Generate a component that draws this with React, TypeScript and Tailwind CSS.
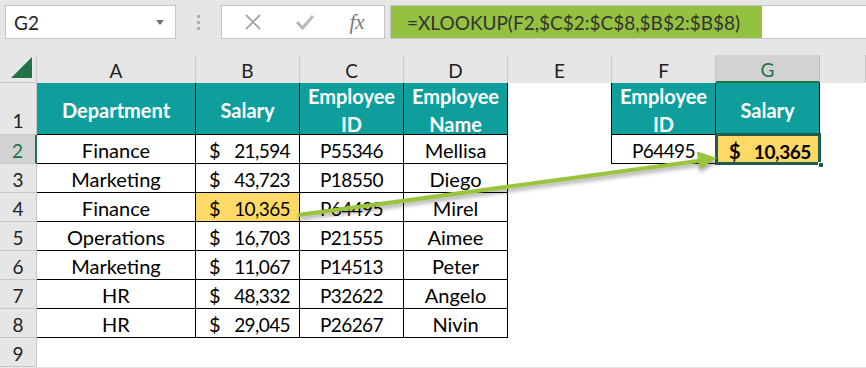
import React from "react";

const cols = ["A", "B", "C", "D", "E", "F", "G", ""];

type Row = { dept: string; sal: string; id: string; name: string; hl?: boolean };
const rows: Row[] = [
  { dept: "Finance", sal: "21,594", id: "P55346", name: "Mellisa" },
  { dept: "Marketing", sal: "43,723", id: "P18550", name: "Diego" },
  { dept: "Finance", sal: "10,365", id: "P64495", name: "Mirel", hl: true },
  { dept: "Operations", sal: "16,703", id: "P21555", name: "Aimee" },
  { dept: "Marketing", sal: "11,067", id: "P14513", name: "Peter" },
  { dept: "HR", sal: "48,332", id: "P32622", name: "Angelo" },
  { dept: "HR", sal: "29,045", id: "P26267", name: "Nivin" },
];

const cellBase = "flex items-end justify-center pb-[3px] text-[20px] leading-none text-black";
const numCell = "flex items-end justify-center pb-[3px] text-[19px] tracking-[-0.6px] leading-none text-black";
const tb = "border-r border-b border-black";

export default function App() {
  return (
    <div className="relative w-[866px] h-[368px] overflow-hidden bg-[#e6e6e6] font-['Lato',sans-serif]">
      {/* Toolbar */}
      <div className="flex h-[55px] items-start pt-[5px]">
        <div className="ml-[5px] flex h-[34px] w-[171px] items-center justify-between border border-[#c6c6c6] bg-white pl-[8px] pr-[11px]">
          <span className="text-[19px] leading-none text-[#222]">G2</span>
          <svg width="8" height="5" viewBox="0 0 8 5">
            <path d="M0 0 L8 0 L4 5 Z" fill="#6f6f6f" />
          </svg>
        </div>
        <div className="flex h-[34px] w-[45px] flex-col items-center justify-center gap-[3px]">
          <div className="h-[3px] w-[3px] bg-[#b0b0b0]" />
          <div className="h-[3px] w-[3px] bg-[#b0b0b0]" />
          <div className="h-[3px] w-[3px] bg-[#b0b0b0]" />
        </div>
        <div className="flex h-[34px] w-[164px] items-center border border-[#c6c6c6] bg-white">
          <div className="flex w-[54px] justify-center pl-[8px]">
            <svg width="16" height="16" viewBox="0 0 16 16">
              <path d="M1 1 L15 15 M15 1 L1 15" stroke="#a6a6a6" strokeWidth="1.8" />
            </svg>
          </div>
          <div className="flex w-[54px] justify-center pl-[4px]">
            <svg width="18" height="16" viewBox="0 0 18 16">
              <path d="M1 8 L6.5 14 L17 2" stroke="#b8b8b8" strokeWidth="3" fill="none" />
            </svg>
          </div>
          <div className="flex w-[54px] justify-center">
            <span className="font-['Liberation_Serif',serif] text-[21px] italic leading-none text-[#7a7a7a]">
              fx
            </span>
          </div>
        </div>
        <div className="ml-[5px] flex h-[34px] flex-1 border border-r-0 border-[#c6c6c6] bg-white">
          <div className="flex h-full w-[371px] items-center bg-[#94c13f] pl-[16px] text-[19px] leading-none text-[#333]">
            =XLOOKUP(F2,$C$2:$C$8,$B$2:$B$8)
          </div>
        </div>
      </div>

      {/* Sheet grid */}
      <div className="grid grid-cols-[37px_159px_104px_104px_104px_104px_104px_104px_46px] grid-rows-[28px_52px_repeat(8,29px)] bg-white">
        {/* Header row */}
        <div className="flex items-end justify-end border-r border-b border-[#c8c8c8] bg-[#e6e6e6] pb-[4px] pr-[4px]">
          <svg width="21" height="21" viewBox="0 0 21 21">
            <path d="M0 21 L21 0 L21 21 Z" fill="#217346" />
          </svg>
        </div>
        {cols.map((c, i) => (
          <div
            key={i}
            className={
              c === "G"
                ? "flex items-center justify-center border-r border-b-2 border-r-[#bdbdbd] border-b-[#217346] bg-[#d2d2d2] pt-[3px] text-[19px] leading-none text-[#217346]"
                : "flex items-center justify-center border-r border-[#c8c8c8] bg-[#e6e6e6] pt-[3px] text-[19px] leading-none text-[#222]"
            }
          >
            {c}
          </div>
        ))}

        {/* Row 1 */}
        <div className="flex items-end justify-center border-r border-b border-[#c8c8c8] bg-[#e6e6e6] pb-[4px] text-[19px] leading-none text-[#222]">
          1
        </div>
        <div className={`flex items-center justify-center bg-[#0e9f9c] pt-[2px] text-[20px] font-bold text-white ${tb}`}>
          Department
        </div>
        <div className={`flex items-center justify-center bg-[#0e9f9c] pt-[2px] text-[20px] font-bold text-white ${tb}`}>
          Salary
        </div>
        <div className={`flex flex-col items-center justify-center bg-[#0e9f9c] pt-[2px] text-[20px] font-bold leading-[28px] text-white ${tb}`}>
          <span>Employee</span>
          <span>ID</span>
        </div>
        <div className={`flex flex-col items-center justify-center bg-[#0e9f9c] pt-[2px] text-[20px] font-bold leading-[28px] text-white ${tb}`}>
          <span>Employee</span>
          <span>Name</span>
        </div>
        <div className="border-r border-black" />
        <div className={`flex flex-col items-center justify-center bg-[#0e9f9c] pt-[2px] text-[20px] font-bold leading-[28px] text-white ${tb}`}>
          <span>Employee</span>
          <span>ID</span>
        </div>
        <div className={`flex items-center justify-center bg-[#0e9f9c] pt-[2px] text-[20px] font-bold text-white ${tb}`}>
          Salary
        </div>
        <div />

        {/* Rows 2-8 */}
        {rows.map((r, i) => {
          const n = i + 2;
          return (
            <React.Fragment key={n}>
              <div
                className={
                  n === 2
                    ? "flex items-end justify-center border-r-2 border-b border-r-[#217346] border-b-[#c8c8c8] bg-[#d2d2d2] pb-[3px] text-[19px] leading-none text-[#217346]"
                    : "flex items-end justify-center border-r border-b border-[#c8c8c8] bg-[#e6e6e6] pb-[3px] text-[19px] leading-none text-[#222]"
                }
              >
                {n}
              </div>
              <div className={`${cellBase} ${tb}`}>{r.dept}</div>
              <div
                className={`flex items-end justify-between pb-[3px] pl-[13px] pr-[9px] text-[20px] leading-none text-black ${tb} ${
                  r.hl ? "bg-[#ffd966]" : ""
                }`}
              >
                <span>$</span>
                <span className="text-[19px] tracking-[-0.6px]">{r.sal}</span>
              </div>
              <div className={`${numCell} ${tb}`}>{r.id}</div>
              <div className={`${cellBase} ${tb}`}>{r.name}</div>
              {n === 2 ? (
                <>
                  <div className="border-r border-black" />
                  <div className={`${numCell} ${tb}`}>P64495</div>
                  <div className="relative flex items-end justify-between bg-[#ffd966] pb-[3px] pl-[13px] pr-[9px] text-[20px] font-bold leading-none text-black">
                    <span>$</span>
                    <span className="text-[19px] tracking-[-0.4px]">10,365</span>
                    <div className="pointer-events-none absolute -inset-[1px] -top-[2px] border-[3px] border-[#1e5b50]" />
                    <div className="absolute -right-[4px] -bottom-[4px] h-[6px] w-[6px] border border-white bg-[#1e5b50]" />
                  </div>
                  <div />
                </>
              ) : (
                <>
                  <div />
                  <div />
                  <div />
                  <div />
                </>
              )}
            </React.Fragment>
          );
        })}

        {/* Row 9 */}
        <div className="flex items-end justify-center border-r border-b border-[#c8c8c8] bg-[#e6e6e6] pb-[3px] text-[19px] leading-none text-[#222]">
          9
        </div>
        {cols.map((_, i) => (
          <div key={i} />
        ))}
      </div>

      {/* Arrow overlay */}
      <svg
        className="pointer-events-none absolute left-0 top-0"
        width="866"
        height="368"
        viewBox="0 0 866 368"
        style={{ filter: "drop-shadow(1px 3px 2px rgba(0,0,0,0.35))" }}
      >
        <line x1="298" y1="215" x2="700" y2="160.8" stroke="#9bc43c" strokeWidth="4" />
        <polygon points="717,158 699.4,169.4 697,151.6" fill="#9bc43c" />
      </svg>
    </div>
  );
}
